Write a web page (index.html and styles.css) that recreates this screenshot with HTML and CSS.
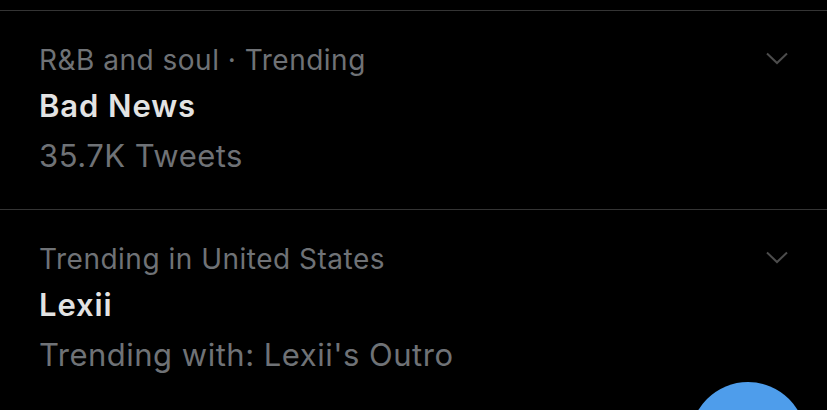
FILE: index.html
```html
<!DOCTYPE html>
<html lang="en">
<head>
  <meta charset="UTF-8" />
  <title>Trends</title>
  <link rel="stylesheet" href="styles.css">
</head>
<body>

  <div id="screen">
    <div id="trends">
      <div class="trend">
        <div class="trend-text">
          <div class="trend-meta">R&amp;B and soul · Trending</div>
          <div class="trend-name">Bad News</div>
          <div class="trend-count">35.7K Tweets</div>
        </div>
        <svg class="chevron" width="22" height="13" viewBox="0 0 22 13">
          <path d="M1 1.5 L11 11 L21 1.5" />
        </svg>
      </div>
      <div class="trend">
        <div class="trend-text">
          <div class="trend-meta">Trending in United States</div>
          <div class="trend-name">Lexii</div>
          <div class="trend-count">Trending with: Lexii's Outro</div>
        </div>
        <svg class="chevron" width="22" height="13" viewBox="0 0 22 13">
          <path d="M1 1.5 L11 11 L21 1.5" />
        </svg>
      </div>
    </div>

    <!-- compose button, cut off by the screen edge -->
    <div id="composeBtn"></div>
  </div>

</body>
</html>
```

FILE: styles.css
```css
* { box-sizing: border-box; }
body {
  margin: 0;
  background-color: #000;
  font-family: Inter, "Liberation Sans", sans-serif;
}
#screen {
  position: relative;
  height: 410px;
  overflow: hidden;
}
#trends {
  padding-top: 10px;
}
.trend {
  display: flex;
  justify-content: space-between;
  align-items: flex-start;
  border-top: 1px solid #343434;
  padding: 27px 39px 27px 39px;
  height: 199px;
}
.trend-text {
  letter-spacing: 0.5px;
}
.trend-meta {
  color: #6f7276;
  font-size: 28px;
  line-height: 44px;
}
.trend-name {
  color: #e3e3e3;
  font-size: 31px;
  font-weight: 600;
  line-height: 48px;
  letter-spacing: 0.9px;
}
.trend-count {
  color: #6f7276;
  font-size: 31px;
  line-height: 52px;
}
.chevron {
  margin-top: 14px;
}
.chevron path {
  fill: none;
  stroke: #4c4c4c;
  stroke-width: 2;
}
#composeBtn {
  position: absolute;
  left: 690px;
  top: 382px;
  width: 116px;
  height: 116px;
  border-radius: 50%;
  background-color: #4e9deb;
}
```
